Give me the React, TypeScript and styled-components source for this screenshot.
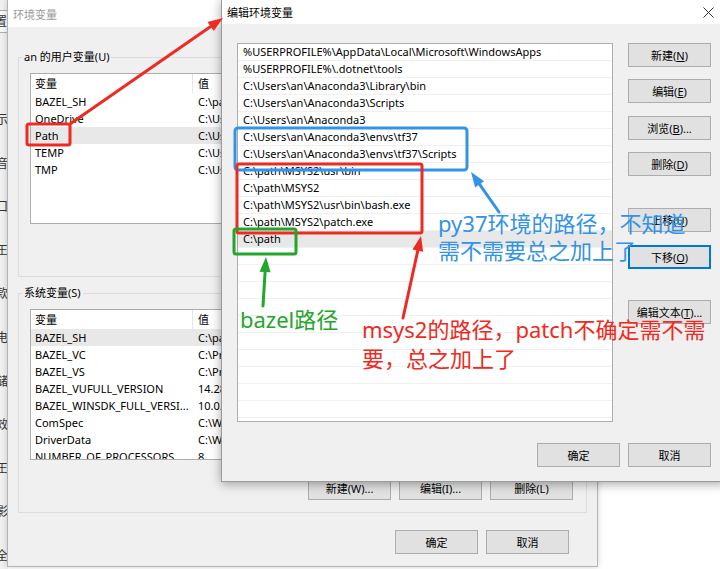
import React from "react";
import styled, { createGlobalStyle } from "styled-components";

const GlobalStyle = createGlobalStyle`
  html, body {
    margin: 0;
    padding: 0;
    background: #fff;
  }
  body {
    font-family: "Noto Sans", "Noto Sans CJK SC", sans-serif;
    font-size: 11px;
    color: #000;
  }
`;

const Desktop = styled.div`
  position: relative;
  width: 720px;
  height: 569px;
  overflow: hidden;
  background: #fff;
`;

/* the settings window behind both dialogs, only its left edge shows */
const SysWindow = styled.div`
  position: absolute;
  left: -60px;
  top: 0;
  width: 68px;
  height: 569px;
  background: #f0f0f0;
  display: flex;
  flex-direction: column;
  align-items: flex-end;
  font-size: 12px;
  color: #333;
`;

const SysTab = styled.div`
  margin-top: 10px;
  width: 40px;
  height: 23px;
  box-sizing: border-box;
  border: 1px solid #adadad;
  background: #f8f8f8;
  text-align: right;
  line-height: 21px;
`;

const SysNav = styled.div`
  margin-top: 65px;
  text-align: right;
  line-height: 43.6px;
`;

/* 环境变量 dialog */
const EnvDialog = styled.div`
  position: absolute;
  left: 7px;
  top: -1px;
  width: 591px;
  height: 568px;
  box-sizing: border-box;
  background: #f0f0f0;
  border: 1px solid #b4b4b4;
  box-shadow: 0 0 6px rgba(0, 0, 0, 0.18);
  display: flex;
  flex-direction: column;
`;

const TitleBar = styled.div<{ $active?: boolean; $height: number }>`
  flex: none;
  height: ${(p) => p.$height}px;
  background: #fff;
  display: flex;
  align-items: center;
  justify-content: space-between;
  padding-left: 5px;
  color: ${(p) => (p.$active ? "#000" : "#9a9a9a")};
`;

const CloseBox = styled.div`
  width: 34px;
  height: 100%;
  display: flex;
  align-items: center;
  justify-content: center;
`;

const EnvBody = styled.div`
  padding: 22px 10px 0;
  display: flex;
  flex-direction: column;
`;

const GroupBox = styled.fieldset<{ $bottom: number }>`
  margin: 0;
  min-width: 0;
  border: 1px solid #dcdcdc;
  padding: 8px 13px ${(p) => p.$bottom}px 11px;
  & + & {
    margin-top: 8px;
  }
`;

const GroupLabel = styled.legend`
  margin-left: -8px;
  padding: 0 2px;
  line-height: 16px;
`;

const VarList = styled.div`
  height: 151px;
  box-sizing: border-box;
  background: #fff;
  border: 1px solid #adadad;
  overflow: hidden;
`;

const VarRow = styled.div<{ $selected?: boolean; $header?: boolean }>`
  display: flex;
  height: ${(p) => (p.$header ? 19 : 17)}px;
  line-height: ${(p) => (p.$header ? 19 : 17)}px;
  background: ${(p) => (p.$selected ? "#e8e8e8" : "#fff")};
  white-space: nowrap;
`;

const NameCell = styled.div<{ $header?: boolean }>`
  flex: none;
  width: 162px;
  box-sizing: border-box;
  padding-left: 4px;
  overflow: hidden;
  border-right: 1px solid ${(p) => (p.$header ? "#e5e5e5" : "transparent")};
`;

const ValueCell = styled.div`
  padding-left: 5px;
`;

const ButtonRow = styled.div<{ $top: number; $right?: number }>`
  display: flex;
  justify-content: flex-end;
  gap: 8px;
  margin-top: ${(p) => p.$top}px;
  padding-right: ${(p) => p.$right ?? 0}px;
`;

const WinButton = styled.button<{ $focused?: boolean; $top?: number }>`
  flex: none;
  width: 83px;
  height: 24px;
  box-sizing: border-box;
  margin: ${(p) => p.$top ?? 0}px 0 0;
  padding: 0;
  background: #e1e1e1;
  border: ${(p) => (p.$focused ? "2px solid #0078d7" : "1px solid #adadad")};
  font: inherit;
  color: #000;
  text-align: center;
  u {
    text-decoration: underline;
  }
`;

/* 编辑环境变量 dialog */
const EditDialog = styled.div`
  position: absolute;
  left: 221px;
  top: -1px;
  width: 505px;
  height: 483px;
  box-sizing: border-box;
  background: #f0f0f0;
  border: 1px solid #9a9a9a;
  box-shadow: 0 2px 10px rgba(0, 0, 0, 0.35);
  display: flex;
  flex-direction: column;
`;

const EditBody = styled.div`
  padding: 19px 14px 0 15px;
  display: flex;
  flex-direction: column;
`;

const EditMain = styled.div`
  display: flex;
  gap: 15px;
`;

const PathList = styled.div`
  width: 376px;
  height: 379px;
  box-sizing: border-box;
  background: #fff;
  border: 1px solid #adadad;
  overflow: hidden;
`;

const PathRow = styled.div<{ $selected?: boolean }>`
  height: 17px;
  box-sizing: border-box;
  border-bottom: 1px solid #f0f0f0;
  padding-left: 5px;
  line-height: 16px;
  white-space: nowrap;
  background: ${(p) => (p.$selected ? "#e8e8e8" : "#fff")};
`;

const SideButtons = styled.div`
  display: flex;
  flex-direction: column;
`;

/* hand-drawn notes on top of the screenshot */
const Marks = styled.svg`
  position: absolute;
  left: 0;
  top: 0;
  pointer-events: none;
`;

const Note = styled.div<{ $x: number; $y: number; $color: string; $lh: number }>`
  position: absolute;
  left: ${(p) => p.$x}px;
  top: ${(p) => p.$y}px;
  color: ${(p) => p.$color};
  font-family: "Noto Sans", "Noto Sans CJK SC", sans-serif;
  font-size: 22px;
  line-height: ${(p) => p.$lh}px;
  white-space: nowrap;
`;

const RED = "#ee2a22";
const BLUE = "#3393e6";
const GREEN = "#22a62b";

function Arrow({ x1, y1, x2, y2, color }: { x1: number; y1: number; x2: number; y2: number; color: string }) {
  const len = Math.hypot(x2 - x1, y2 - y1);
  const ux = (x2 - x1) / len;
  const uy = (y2 - y1) / len;
  const hl = 15;
  const hw = 5.5;
  const bx = x2 - ux * hl;
  const by = y2 - uy * hl;
  const pts = `${x2},${y2} ${bx - uy * hw},${by + ux * hw} ${bx + uy * hw},${by - ux * hw}`;
  return (
    <g>
      <line x1={x1} y1={y1} x2={bx} y2={by} stroke={color} strokeWidth={3} strokeLinecap="round" />
      <polygon points={pts} fill={color} />
    </g>
  );
}

const sideChars = ["示", "音", "口", "王", "款", "电", "储", "效", "王", "影", "全"];

const userVars = [
  ["BAZEL_SH", "C:\\path\\MSYS2\\usr\\bin\\bash.exe"],
  ["OneDrive", "C:\\Users\\an\\OneDrive"],
  ["Path", "C:\\Users\\an\\AppData\\Local\\Microsoft\\WindowsApps"],
  ["TEMP", "C:\\Users\\an\\AppData\\Local\\Temp"],
  ["TMP", "C:\\Users\\an\\AppData\\Local\\Temp"],
];

const systemVars = [
  ["BAZEL_SH", "C:\\path\\MSYS2\\usr\\bin\\bash.exe"],
  ["BAZEL_VC", "C:\\Program Files (x86)\\Microsoft Visual Studio\\2019\\BuildTools\\VC"],
  ["BAZEL_VS", "C:\\Program Files (x86)\\Microsoft Visual Studio\\2019\\BuildTools"],
  ["BAZEL_VUFULL_VERSION", "14.28.29333"],
  ["BAZEL_WINSDK_FULL_VERSI...", "10.0.19041.0"],
  ["ComSpec", "C:\\Windows\\system32\\cmd.exe"],
  ["DriverData", "C:\\Windows\\System32\\Drivers\\DriverData"],
  ["NUMBER_OF_PROCESSORS", "8"],
];

const pathEntries = [
  "%USERPROFILE%\\AppData\\Local\\Microsoft\\WindowsApps",
  "%USERPROFILE%\\.dotnet\\tools",
  "C:\\Users\\an\\Anaconda3\\Library\\bin",
  "C:\\Users\\an\\Anaconda3\\Scripts",
  "C:\\Users\\an\\Anaconda3",
  "C:\\Users\\an\\Anaconda3\\envs\\tf37",
  "C:\\Users\\an\\Anaconda3\\envs\\tf37\\Scripts",
  "C:\\path\\MSYS2\\usr\\bin",
  "C:\\path\\MSYS2",
  "C:\\path\\MSYS2\\usr\\bin\\bash.exe",
  "C:\\path\\MSYS2\\patch.exe",
  "C:\\path",
];

const pathRows = [...pathEntries, ...Array(11).fill("")];

function VarTable({ rows, selected }: { rows: string[][]; selected: number }) {
  return (
    <VarList>
      <VarRow $header>
        <NameCell $header>变量</NameCell>
        <ValueCell>值</ValueCell>
      </VarRow>
      {rows.map(([name, value], i) => (
        <VarRow key={name} $selected={i === selected}>
          <NameCell>{name}</NameCell>
          <ValueCell>{value}</ValueCell>
        </VarRow>
      ))}
    </VarList>
  );
}

function App() {
  return (
    <Desktop>
      <GlobalStyle />

      <SysWindow>
        <SysTab>置</SysTab>
        <SysNav>
          {sideChars.map((c, i) => (
            <div key={i}>{c}</div>
          ))}
        </SysNav>
      </SysWindow>

      <EnvDialog>
        <TitleBar $height={27}>环境变量</TitleBar>
        <EnvBody>
          <GroupBox $bottom={52}>
            <GroupLabel>an 的用户变量(U)</GroupLabel>
            <VarTable rows={userVars} selected={2} />
          </GroupBox>
          <GroupBox $bottom={12}>
            <GroupLabel>系统变量(S)</GroupLabel>
            <VarTable rows={systemVars} selected={0} />
            <ButtonRow $top={16}>
              <WinButton>新建(W)...</WinButton>
              <WinButton>编辑(I)...</WinButton>
              <WinButton>删除(L)</WinButton>
            </ButtonRow>
          </GroupBox>
          <ButtonRow $top={17} $right={18}>
            <WinButton>确定</WinButton>
            <WinButton>取消</WinButton>
          </ButtonRow>
        </EnvBody>
      </EnvDialog>

      <EditDialog>
        <TitleBar $active $height={24}>
          编辑环境变量
          <CloseBox>
            <svg width="11" height="11" viewBox="0 0 11 11">
              <path d="M0.5 0.5L10.5 10.5M10.5 0.5L0.5 10.5" stroke="#333" strokeWidth="1" />
            </svg>
          </CloseBox>
        </TitleBar>
        <EditBody>
          <EditMain>
            <PathList>
              {pathRows.map((p, i) => (
                <PathRow key={i} $selected={i === 11}>
                  {p}
                </PathRow>
              ))}
            </PathList>
            <SideButtons>
              <WinButton>
                新建(<u>N</u>)
              </WinButton>
              <WinButton $top={12}>
                编辑(<u>E</u>)
              </WinButton>
              <WinButton $top={13}>
                浏览(<u>B</u>)...
              </WinButton>
              <WinButton $top={12}>
                删除(<u>D</u>)
              </WinButton>
              <WinButton $top={32}>
                上移(<u>U</u>)
              </WinButton>
              <WinButton $top={13} $focused>
                下移(<u>O</u>)
              </WinButton>
              <WinButton $top={31}>
                编辑文本(<u>T</u>)...
              </WinButton>
            </SideButtons>
          </EditMain>
          <ButtonRow $top={21}>
            <WinButton>确定</WinButton>
            <WinButton>取消</WinButton>
          </ButtonRow>
        </EditBody>
      </EditDialog>

      <Marks width="720" height="569" viewBox="0 0 720 569">
        <rect x="27" y="124" width="43" height="21" rx="2" fill="none" stroke={RED} strokeWidth="3" />
        <Arrow x1={70} y1={124} x2={223} y2={18} color={RED} />
        <rect x="235" y="128" width="232" height="42" rx="3" fill="none" stroke={BLUE} strokeWidth="3" />
        <rect x="237" y="164" width="185" height="69" rx="2" fill="none" stroke={RED} strokeWidth="3" />
        <rect x="234" y="229" width="62" height="25" rx="2" fill="none" stroke={GREEN} strokeWidth="3" />
        <Arrow x1={499} y1={212} x2={471} y2={172} color={BLUE} />
        <Arrow x1={263} y1={306} x2={266} y2={257} color={GREEN} />
        <Arrow x1={403} y1={318} x2={421} y2={236} color={RED} />
      </Marks>

      <Note $x={438} $y={210} $color={BLUE} $lh={27}>
        py37环境的路径，不知道
        <br />
        需不需要总之加上了
      </Note>
      <Note $x={240} $y={305} $color={GREEN} $lh={28}>
        bazel路径
      </Note>
      <Note $x={362} $y={315} $color={RED} $lh={29}>
        msys2的路径，patch不确定需不需
        <br />
        要，总之加上了
      </Note>
    </Desktop>
  );
}

export default App;
